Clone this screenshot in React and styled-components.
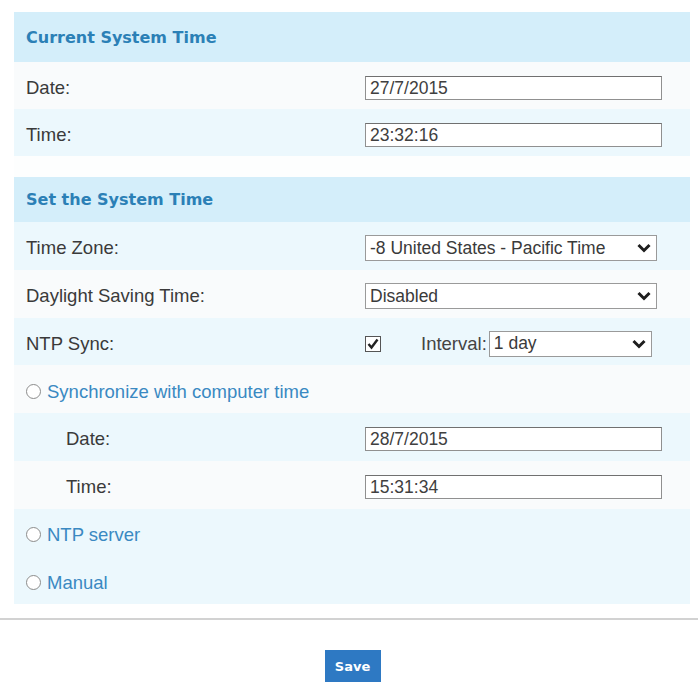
import React from 'react'
import styled, { createGlobalStyle } from 'styled-components'

const GlobalStyle = createGlobalStyle`
  body {
    margin: 0;
    background: #ffffff;
    font-family: "Liberation Sans", Arial, sans-serif;
  }
`

const Page = styled.div`
  width: 698px;
  padding-top: 12px;
`

const Panel = styled.div`
  margin: 0 8px 0 14px;
`

const SectionHeader = styled.div`
  display: flex;
  align-items: center;
  height: ${(p) => p.$height}px;
  padding-left: 12px;
  background: #d4eefa;
  color: #2b80b6;
  font-family: "DejaVu Sans", Verdana, sans-serif;
  font-weight: bold;
  font-size: 16px;
`

const Row = styled.div`
  box-sizing: border-box;
  display: grid;
  grid-template-columns: 351px 1fr;
  align-items: center;
  height: ${(p) => p.$height}px;
  padding-top: 5px;
  background: ${(p) => (p.$tone === 'blue' ? '#ecf8fd' : '#f9fbfc')};
`

const Spacer = styled.div`
  height: 21px;
  background: #fdfefe;
`

const Label = styled.div`
  padding-left: ${(p) => (p.$indent ? 52 : 12)}px;
  color: #3a3a3a;
  font-size: 18.5px;
`

const RadioLabel = styled.label`
  display: flex;
  align-items: center;
  gap: 6px;
  padding-left: 12px;
  color: #3a89c2;
  font-size: 18.5px;
`

const RadioDot = styled.span`
  box-sizing: border-box;
  width: 15px;
  height: 15px;
  border-radius: 50%;
  border: 1.5px solid #8c8c8c;
  background: #ffffff;
`

const TextBox = styled.div`
  box-sizing: border-box;
  width: 297px;
  height: 24px;
  padding: 0 4px;
  display: flex;
  align-items: center;
  border: 1px solid #909090;
  border-top-color: #707070;
  background: #ffffff;
  color: #404040;
  font-size: 17.5px;
`

const SelectBox = styled.div`
  box-sizing: border-box;
  width: ${(p) => p.$width}px;
  height: 26px;
  padding: 0 4px;
  display: flex;
  align-items: center;
  justify-content: space-between;
  border: 1px solid #9a9a9a;
  background: #ffffff;
  color: #3a3a3a;
  font-size: 17.5px;
`

const Controls = styled.div`
  display: flex;
  align-items: center;
`

const CheckWrap = styled.span`
  display: flex;
  margin-right: 40px;
`

const IntervalLabel = styled.span`
  margin-right: 2px;
  color: #444444;
  font-size: 18.5px;
`

const Divider = styled.div`
  margin-top: 14px;
  border-top: 2px solid #d2d2d2;
`

const Footer = styled.div`
  display: flex;
  justify-content: center;
  padding-top: 30px;
`

const SaveButton = styled.button`
  width: 56px;
  height: 32px;
  margin-left: 7px;
  border: none;
  background: #2e79c3;
  color: #ffffff;
  font-family: "DejaVu Sans", Verdana, sans-serif;
  font-weight: bold;
  font-size: 13px;
`

const Chevron = () => (
  <svg width="16" height="10" viewBox="0 0 16 10">
    <path d="M2.5 2 L8 7.5 L13.5 2" fill="none" stroke="#1e1e1e" strokeWidth="3" />
  </svg>
)

const Check = () => (
  <svg width="16" height="16" viewBox="0 0 16 16">
    <rect x="0.5" y="0.5" width="15" height="15" fill="#fff" stroke="#555" />
    <path d="M3.5 8 L6.5 11.5 L12.5 3.5" fill="none" stroke="#222" strokeWidth="2.4" />
  </svg>
)

const Select = ({ width, children }) => (
  <SelectBox $width={width}>
    <span>{children}</span>
    <Chevron />
  </SelectBox>
)

const Radio = ({ children }) => (
  <RadioLabel>
    <RadioDot />
    {children}
  </RadioLabel>
)

const App = () => {
  return <Page>
    <GlobalStyle />
    <Panel>
      <SectionHeader $height={50}>Current System Time</SectionHeader>
      <Row $height={47}>
        <Label>Date:</Label>
        <TextBox>27/7/2015</TextBox>
      </Row>
      <Row $height={47} $tone="blue">
        <Label>Time:</Label>
        <TextBox>23:32:16</TextBox>
      </Row>
      <Spacer />

      <SectionHeader $height={45}>Set the System Time</SectionHeader>
      <Row $height={47.75} $tone="blue">
        <Label>Time Zone:</Label>
        <Select width={292}>-8 United States - Pacific Time</Select>
      </Row>
      <Row $height={47.75}>
        <Label>Daylight Saving Time:</Label>
        <Select width={292}>Disabled</Select>
      </Row>
      <Row $height={47.75} $tone="blue">
        <Label>NTP Sync:</Label>
        <Controls>
          <CheckWrap><Check /></CheckWrap>
          <IntervalLabel>Interval:</IntervalLabel>
          <Select width={163}>1 day</Select>
        </Controls>
      </Row>
      <Row $height={47.75}>
        <Radio>Synchronize with computer time</Radio>
      </Row>
      <Row $height={47.75} $tone="blue">
        <Label $indent>Date:</Label>
        <TextBox>28/7/2015</TextBox>
      </Row>
      <Row $height={47.75}>
        <Label $indent>Time:</Label>
        <TextBox>15:31:34</TextBox>
      </Row>
      <Row $height={47.75} $tone="blue">
        <Radio>NTP server</Radio>
      </Row>
      <Row $height={47.75} $tone="blue">
        <Radio>Manual</Radio>
      </Row>
    </Panel>
    <Divider />
    <Footer>
      <SaveButton>Save</SaveButton>
    </Footer>
  </Page>
}

export default App
